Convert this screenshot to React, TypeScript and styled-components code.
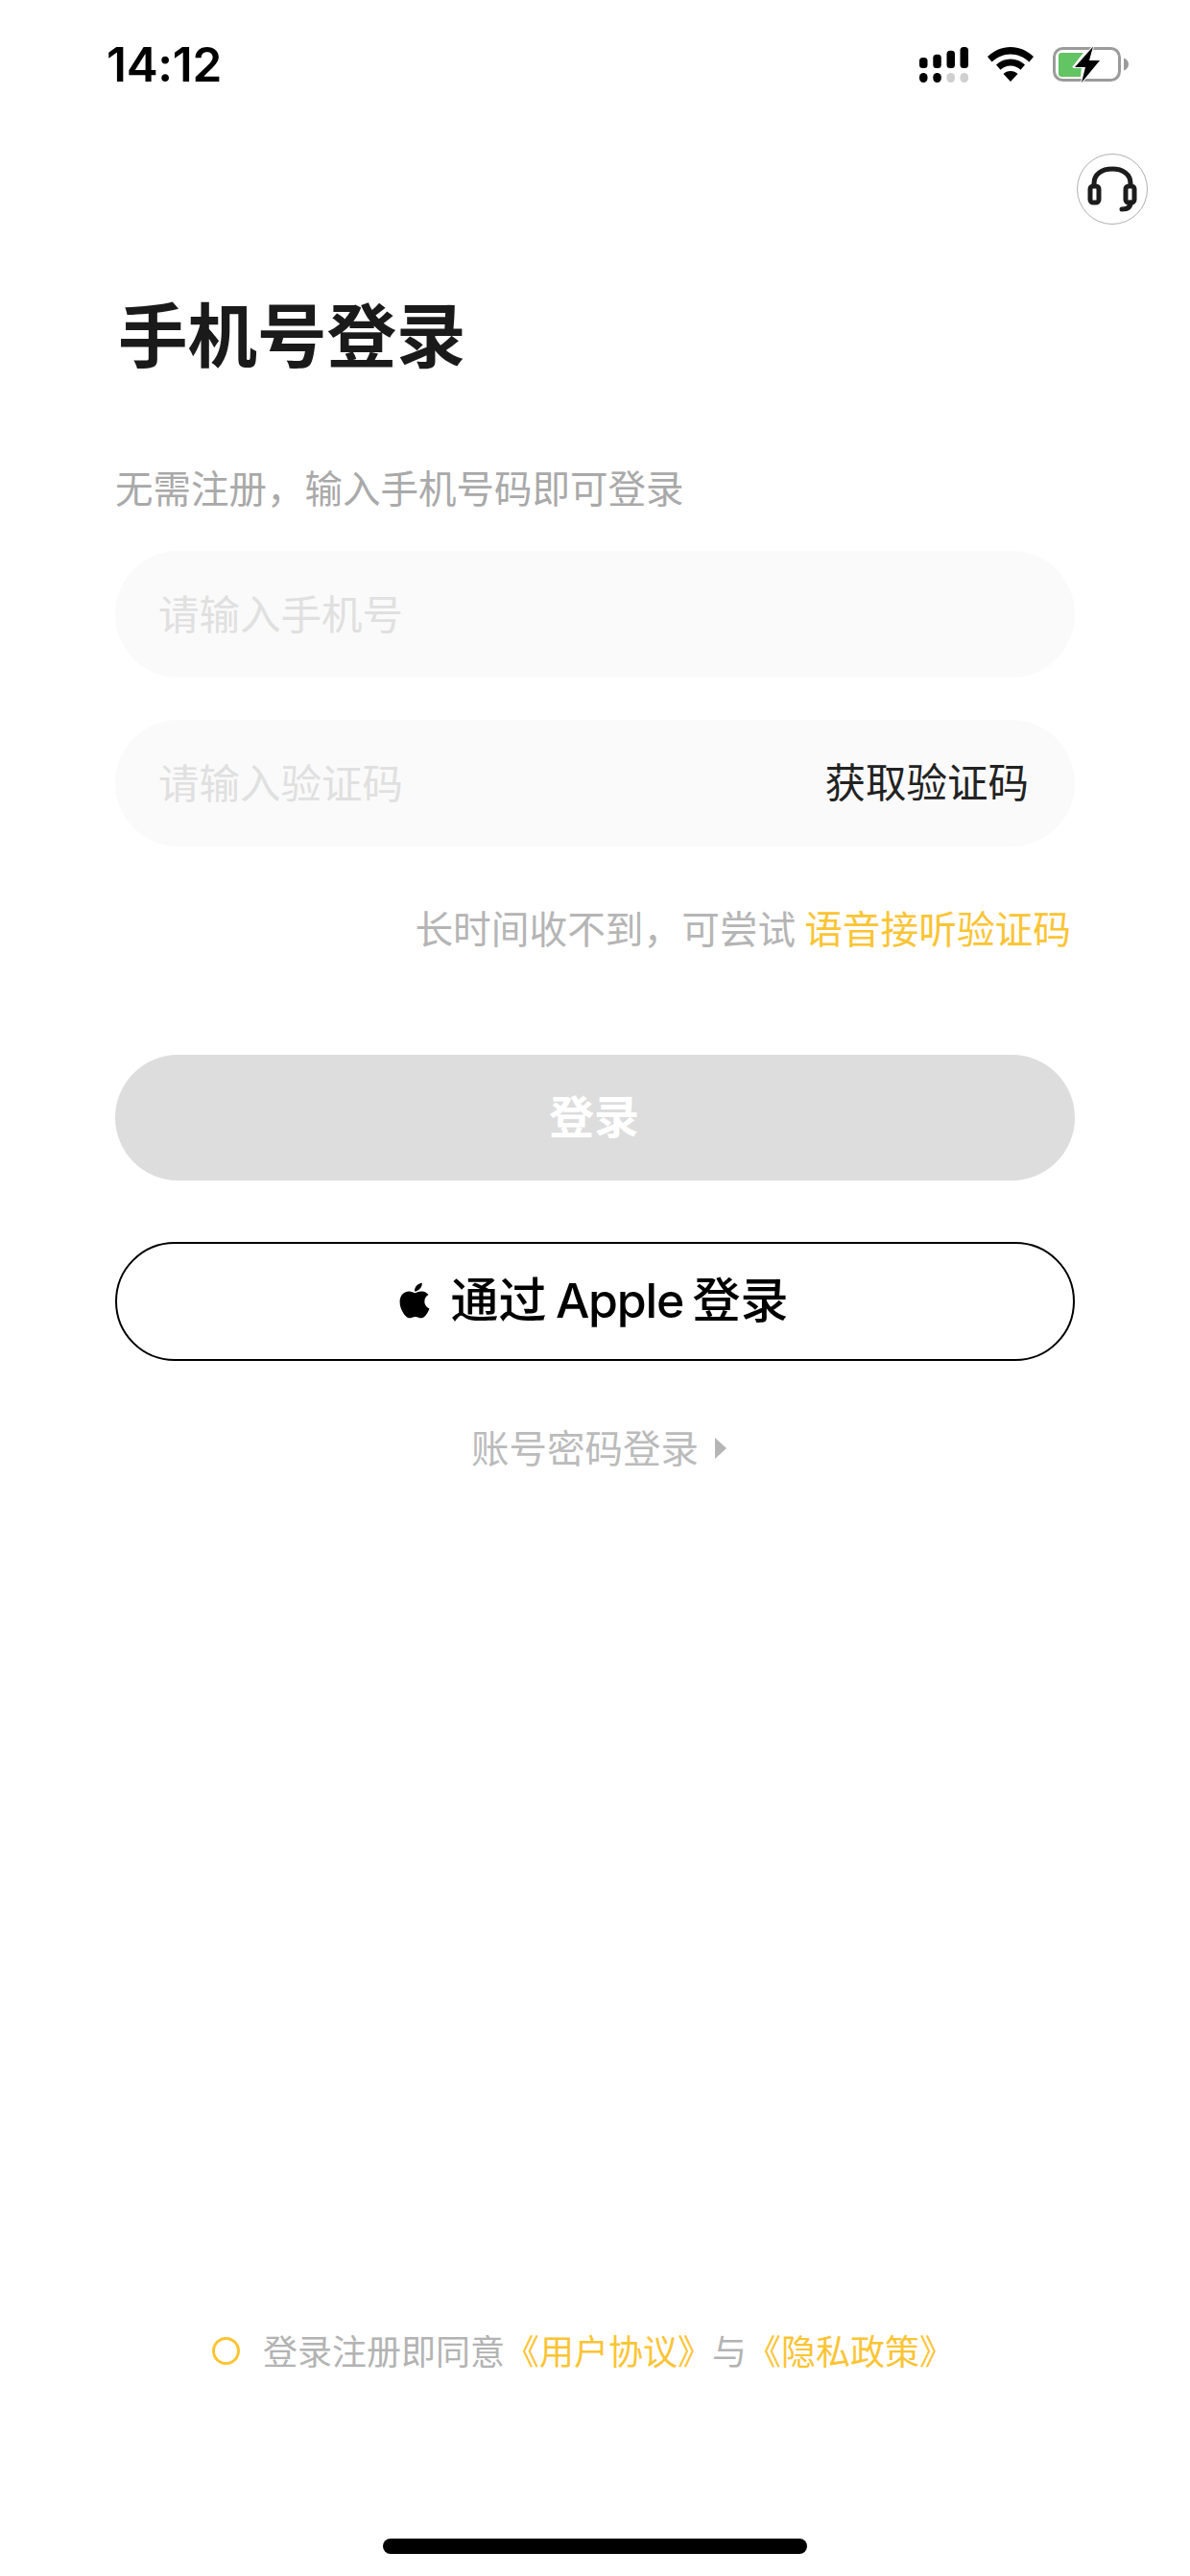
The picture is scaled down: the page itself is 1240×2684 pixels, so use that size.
import React from "react";
import styled, { createGlobalStyle } from "styled-components";
import { FaApple } from "react-icons/fa";

const GlobalStyle = createGlobalStyle`
  html, body { margin: 0; padding: 0; background: #fff; }
  * { box-sizing: border-box; }
  body { font-family: "Noto Sans CJK SC", "Noto Sans", sans-serif; }
`;

const Page = styled.div`
  width: 1240px;
  height: 2684px;
  display: flex;
  flex-direction: column;
  background: #fff;
  overflow: hidden;
`;

const StatusBar = styled.div`
  height: 160px;
  padding: 48px 64px 0 111px;
  display: flex;
  justify-content: space-between;
  align-items: flex-start;
`;

const Time = styled.div`
  font-family: Inter, "Liberation Sans", sans-serif;
  font-weight: 600;
  font-size: 49.5px;
  line-height: 38px;
  letter-spacing: -0.3px;
  color: #000;
`;

const StatusIcons = styled.div`
  display: flex;
  align-items: center;
  gap: 20px;
`;

const SupportRow = styled.div`
  display: flex;
  justify-content: flex-end;
  padding-right: 44px;
`;

const SupportButton = styled.div`
  width: 74px;
  height: 74px;
  border-radius: 50%;
  border: 1.5px solid #b0b0b0;
  display: flex;
  align-items: center;
  justify-content: center;
`;

const Form = styled.div`
  display: flex;
  flex-direction: column;
  padding: 0 120px;
`;

const Title = styled.h1`
  margin: 72px 0 0 3px;
  font-size: 72.5px;
  line-height: 80px;
  font-weight: 700;
  color: #1a1a1a;
`;

const Subtitle = styled.p`
  margin: 97px 0 0;
  font-size: 39.5px;
  line-height: 48px;
  color: #a9a9a9;
`;

const Field = styled.div<{ $gap: number }>`
  margin-top: ${(p) => p.$gap}px;
  height: 132px;
  border-radius: 66px;
  background: #fafafa;
  padding: 0 48px 6px 45px;
  display: flex;
  align-items: center;
  justify-content: space-between;
`;

const FieldInput = styled.input`
  flex: 1;
  min-width: 0;
  border: 0;
  outline: 0;
  background: transparent;
  padding: 0;
  font: inherit;
  font-size: 42.5px;
  color: #222;
  &::placeholder { color: #e0e0e0; opacity: 1; }
`;

const CodeButton = styled.span`
  font-size: 42.5px;
  line-height: 48px;
  color: #222;
`;

const Hint = styled.p`
  margin: 60px 0 0;
  padding-right: 4px;
  text-align: right;
  font-size: 39.7px;
  line-height: 48px;
  color: #b5b5b5;
`;

const Accent = styled.span`
  color: #fbc434;
`;

const LoginButton = styled.button`
  margin-top: 109px;
  height: 131px;
  border: 0;
  border-radius: 66px;
  background: #dddddd;
  color: #fff;
  padding: 0 2px 8px 0;
  font: inherit;
  font-size: 47px;
  font-weight: 700;
`;

const AppleButton = styled.button`
  margin-top: 64px;
  height: 124px;
  border: 2px solid #000;
  border-radius: 62px;
  background: #fff;
  color: #000;
  padding: 0 8px 2px 0;
  font: inherit;
  font-size: 50px;
  font-weight: 500;
  display: flex;
  align-items: center;
  justify-content: center;
  gap: 17px;
`;

const AppleLabel = styled.span`
  font-family: Inter, "Noto Sans CJK SC", sans-serif;
  line-height: 60px;
  word-spacing: -4px;
`;

const AppleWord = styled.span`
  letter-spacing: -1.2px;
`;

const AccountRow = styled.div`
  margin-top: 65px;
  display: flex;
  justify-content: center;
  align-items: center;
  gap: 17px;
  padding-left: 8px;
  font-size: 39.5px;
  line-height: 48px;
  color: #bbbbbb;
`;

const Caret = styled.span`
  width: 0;
  height: 0;
  margin-top: 3px;
  border-left: 12px solid #b5b5b5;
  border-top: 11px solid transparent;
  border-bottom: 11px solid transparent;
`;

const Footer = styled.div`
  margin-top: auto;
  padding-right: 25px;
  display: flex;
  justify-content: center;
  align-items: center;
  gap: 24px;
  font-size: 36px;
  line-height: 48px;
  color: #b3b3b3;
`;

const Radio = styled.span`
  width: 29px;
  height: 29px;
  margin-top: 3px;
  border-radius: 50%;
  border: 3px solid #fbc434;
`;

const HomeBar = styled.div`
  margin: 173px auto 23px;
  width: 442px;
  height: 16px;
  border-radius: 8px;
  background: #000;
`;

const Signal = () => (
  <svg width="51" height="37" viewBox="0 0 51 37">
    <rect x="0" y="11" width="8.500" height="11" rx="3.500" fill="#000" />
    <rect x="14.300" y="7.700" width="8.500" height="14.300" rx="3.500" fill="#000" />
    <rect x="28.500" y="3.700" width="8.500" height="18.300" rx="3.500" fill="#000" />
    <rect x="42.500" y="0" width="8.500" height="22" rx="3.500" fill="#000" />
    <rect x="0" y="27" width="8.500" height="10" rx="4.200" fill="#000" />
    <rect x="14.300" y="27" width="8.500" height="10" rx="4.200" fill="#000" />
    <rect x="28.500" y="27" width="8.500" height="10" rx="4.200" fill="#cfcfcf" />
    <rect x="42.500" y="27" width="8.500" height="10" rx="4.200" fill="#cfcfcf" />
  </svg>
);

const Wifi = () => (
  <svg width="48" height="36" viewBox="0 0 48 36">
    <path d="M24 0C15 0 7 3.500 0 10l4.500 5.500C10 10.500 16.500 7.500 24 7.500s14 3 19.500 8L48 10C41 3.500 33 0 24 0z" fill="#000" />
    <path d="M24 12.500c-5.800 0-11 2.200-15 6l4.500 5.300c2.700-2.600 6.400-4.200 10.500-4.200s7.800 1.600 10.500 4.200l4.500-5.300c-4-3.800-9.200-6-15-6z" fill="#000" />
    <path d="M24 25c-3 0-5.500 1.100-7.500 3L24 36l7.500-8c-2-1.900-4.500-3-7.500-3z" fill="#000" />
  </svg>
);

const Battery = () => (
  <svg width="79" height="38" viewBox="0 0 79 38">
    <rect x="1.500" y="2.500" width="68" height="33" rx="9" fill="none" stroke="#9b9b9b" strokeWidth="3" />
    <path d="M74 12.500c3 .8 5 3.500 5 6.500s-2 5.700-5 6.500z" fill="#9b9b9b" />
    <path d="M6 10a3 3 0 0 1 3-3h23L20 22h10l-1 10H9a3 3 0 0 1-3-3z" fill="#62c462" />
    <path d="M42 0.500L23 22h11l-4 16 19-23H38z" fill="#000" stroke="#fff" strokeWidth="2" paintOrder="stroke" />
  </svg>
);

const Headset = () => (
  <svg width="52" height="48" viewBox="0 0 52 48" fill="none" stroke="#1c1c1c" strokeWidth="5" strokeLinecap="round" strokeLinejoin="round">
    <path d="M7 20v-2C7 8.500 15 3 26 3s19 5.500 19 15v2" />
    <rect x="3" y="21" width="9" height="17" rx="3" />
    <rect x="40" y="21" width="9" height="17" rx="3" />
    <path d="M45 38c0 5-3.500 7-9 7" />
  </svg>
);

export default function App() {
  return (
    <Page>
      <GlobalStyle />
      <StatusBar>
        <Time>14:12</Time>
        <StatusIcons>
          <Signal />
          <Wifi />
          <Battery />
        </StatusIcons>
      </StatusBar>
      <SupportRow>
        <SupportButton>
          <Headset />
        </SupportButton>
      </SupportRow>
      <Form>
        <Title>手机号登录</Title>
        <Subtitle>无需注册，输入手机号码即可登录</Subtitle>
        <Field $gap={43}>
          <FieldInput placeholder="请输入手机号" readOnly />
        </Field>
        <Field $gap={44}>
          <FieldInput placeholder="请输入验证码" readOnly />
          <CodeButton>获取验证码</CodeButton>
        </Field>
        <Hint>
          长时间收不到，可尝试 <Accent>语音接听验证码</Accent>
        </Hint>
        <LoginButton>登录</LoginButton>
        <AppleButton>
          <FaApple size={42} />
          <AppleLabel>
            通过 <AppleWord>Apple</AppleWord> 登录
          </AppleLabel>
        </AppleButton>
        <AccountRow>
          账号密码登录
          <Caret />
        </AccountRow>
      </Form>
      <Footer>
        <Radio />
        <span>
          登录注册即同意<Accent>《用户协议》</Accent>与<Accent>《隐私政策》</Accent>
        </span>
      </Footer>
      <HomeBar />
    </Page>
  );
}
